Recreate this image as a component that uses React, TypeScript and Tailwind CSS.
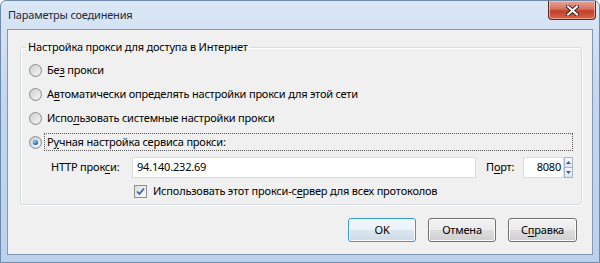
import React from "react";

const FONT = "font-['Noto_Sans','Liberation_Sans',sans-serif]";

function Radio({ checked = false }: { checked?: boolean }) {
  return (
    <span className="w-[13px] h-[13px] rounded-full border border-[#8e8f8f] bg-[radial-gradient(circle_at_60%_60%,#f4f4f4_0%,#d8d8d8_60%,#c4c4c4_100%)] flex items-center justify-center shrink-0">
      <span className="w-[9px] h-[9px] rounded-full bg-[linear-gradient(135deg,#cfcfcf,#f7f7f7)] flex items-center justify-center">
        {checked && (
          <span className="w-[5px] h-[5px] rounded-full bg-[radial-gradient(circle_at_40%_35%,#8cd5ff,#1f6fb7_60%,#0b3d7a)]" />
        )}
      </span>
    </span>
  );
}

function Check() {
  return (
    <span className="w-[13px] h-[13px] border border-[#8e8f8f] bg-[linear-gradient(135deg,#dcdcdc,#fbfbfb)] flex items-center justify-center shrink-0">
      <svg width="9" height="9" viewBox="0 0 9 9">
        <path d="M1 4.5 L3.4 7 L8 1.5" fill="none" stroke="#3e5fa8" strokeWidth="1.8" />
      </svg>
    </span>
  );
}

function U({ children }: { children: React.ReactNode }) {
  return <span className="underline underline-offset-2">{children}</span>;
}

function Btn({ children, def = false }: { children: React.ReactNode; def?: boolean }) {
  return (
    <button
      className={
        "w-full h-[24px] rounded-[3px] border text-[11px] tracking-[-0.2px] text-black flex items-center justify-center shadow-[inset_0_0_0_1px_#fcfcfc] " +
        (def
          ? "border-[#3399dd] bg-[linear-gradient(#f2f8fc_0%,#eaf2f9_50%,#dbe6ef_51%,#cddbe8_100%)]"
          : "border-[#707070] bg-[linear-gradient(#f2f2f2_0%,#ebebeb_50%,#dddddd_51%,#cfcfcf_100%)]")
      }
    >
      {children}
    </button>
  );
}

export default function App() {
  return (
    <div className={`w-[600px] h-[263px] ${FONT} text-[11px] tracking-[-0.2px] text-black bg-[linear-gradient(#dbe7f5,#c3d6ee_40%,#bcd2ec)] border border-[#6f8aaa] rounded-t-[6px] flex flex-col px-[6px] pb-[7px] overflow-hidden`}>
      {/* title bar */}
      <div className="h-[28px] flex items-start justify-between shrink-0">
        <div className="pt-[6px] pl-[1px] text-[11px] text-[#1e2a3a]">Параметры соединения</div>
        <div className="w-[48px] h-[19px] mr-[-3px] rounded-b-[4px] border border-t-0 border-[#5a2a22] bg-[linear-gradient(#e8a394_0%,#d3725f_45%,#c1402a_55%,#d4644a_100%)] flex items-center justify-center shadow-[inset_0_0_0_1px_rgba(255,210,200,0.6)]">
          <svg width="13" height="11" viewBox="0 0 13 11">
            <path d="M2 1.5 L11 9.5 M11 1.5 L2 9.5" stroke="#3b2520" strokeWidth="4" strokeLinecap="square" />
            <path d="M2 1.5 L11 9.5 M11 1.5 L2 9.5" stroke="#fff" strokeWidth="2" strokeLinecap="square" />
          </svg>
        </div>
      </div>

      {/* client area */}
      <div className="flex-1 bg-[#f0f0f0] border border-[#8298b5] flex flex-col px-[12px] pt-[9px]">
        <fieldset className="border border-[#d5dfe5] rounded-[3px] shadow-[inset_1px_1px_0_#fff,1px_1px_0_#fff] pl-[8px] pr-[8px] pb-[8px] h-[166px]">
          <legend className="px-[2px] ml-[-3px] leading-[16px]">Настройка прокси для доступа в Интернет</legend>
          <div className="flex flex-col pt-[3px]">
            <div className="h-[24px] flex items-center gap-[5px]">
              <Radio />
              <span>Бе<U>з</U> прокси</span>
            </div>
            <div className="h-[24px] flex items-center gap-[5px]">
              <Radio />
              <span>А<U>в</U>томатически определять настройки прокси для этой сети</span>
            </div>
            <div className="h-[24px] flex items-center gap-[5px]">
              <Radio />
              <span>Испо<U>л</U>ьзовать системные настройки прокси</span>
            </div>
            <div className="h-[24px] flex items-center gap-[2px]">
              <Radio checked />
              <span className="flex-1 border border-dotted border-[#5a5a5a] h-[18px] flex items-center px-[2px]">
                Р<U>у</U>чная настройка сервиса прокси:
              </span>
            </div>
            <div className="h-[26px] flex items-center pl-[22px]">
              <span className="w-[81px]">HTTP прок<U>с</U>и:</span>
              <span className="w-[344px] h-[21px] bg-white border border-[#dcdcdc] flex items-center px-[4px]">94.140.232.69</span>
              <span className="ml-[10px] w-[37px]">П<U>о</U>рт:</span>
              <span className="w-[41px] h-[21px] bg-white border border-[#dcdcdc] flex items-center justify-end px-[2px]">8080</span>
              <span className="w-[9px] h-[21px] flex flex-col">
                <span className="flex-1 border border-[#a9b5c4] bg-[linear-gradient(#f6f9fc,#dde5ee)] flex items-center justify-center">
                  <svg width="5" height="3" viewBox="0 0 5 3"><path d="M0 3 L2.5 0 L5 3Z" fill="#3d5f8b" /></svg>
                </span>
                <span className="flex-1 border border-t-0 border-[#a9b5c4] bg-[linear-gradient(#f6f9fc,#dde5ee)] flex items-center justify-center">
                  <svg width="5" height="3" viewBox="0 0 5 3"><path d="M0 0 L2.5 3 L5 0Z" fill="#3d5f8b" /></svg>
                </span>
              </span>
            </div>
            <div className="h-[22px] flex items-center gap-[6px] pl-[105px]">
              <Check />
              <span>Использовать этот прокси-с<U>е</U>рвер для всех протоколов</span>
            </div>
          </div>
        </fieldset>
        <div className="flex justify-end gap-[12px] mt-[13px] pr-[3px]">
          <div className="w-[68px]"><Btn def>OK</Btn></div>
          <div className="w-[68px]"><Btn>Отмена</Btn></div>
          <div className="w-[69px]"><Btn>С<U>п</U>равка</Btn></div>
        </div>
      </div>
    </div>
  );
}
